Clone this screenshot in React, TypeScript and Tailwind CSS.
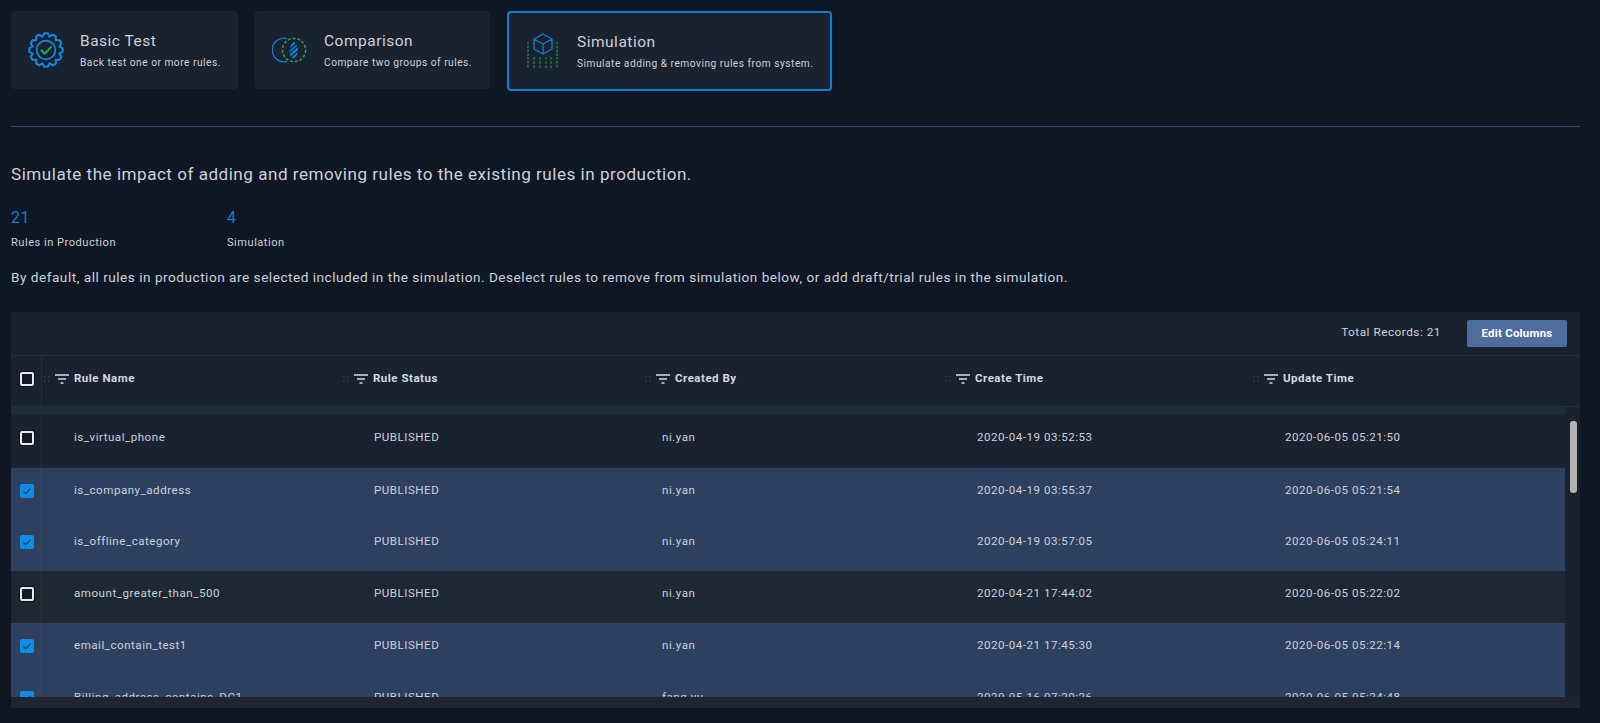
import React from "react";

const gearPath = (() => {
  const cx = 22, cy = 22, teeth = 12, ro = 20.5, ri = 16.8;
  let d = "";
  for (let i = 0; i < teeth; i++) {
    const a = (i / teeth) * Math.PI * 2;
    const st = (Math.PI * 2) / teeth;
    const pts = [
      [ri, a - st * 0.5],
      [ro, a - st * 0.2],
      [ro, a + st * 0.2],
    ];
    pts.forEach(([r, t], j) => {
      const x = (cx + r * Math.cos(t)).toFixed(2);
      const y = (cy + r * Math.sin(t)).toFixed(2);
      d += (i === 0 && j === 0 ? "M" : "L") + x + " " + y + " ";
    });
  }
  return d + "Z";
})();

const GearIcon = () => (
  <svg width="36" height="36" viewBox="0 0 44 44" fill="none">
    <path d={gearPath} stroke="#0d8ce6" strokeWidth="2.4" strokeLinejoin="round" />
    <circle cx="22" cy="22" r="11.5" stroke="#0d8ce6" strokeWidth="2" />
    <path d="M16.5 22.5l4 4 7.5-8" stroke="#22a84f" strokeWidth="2.6" strokeLinecap="round" strokeLinejoin="round" />
  </svg>
);

const CompareIcon = () => (
  <svg width="36" height="26" viewBox="0 0 36 26" fill="none">
    <path d="M15 1.6A11.8 11.8 0 1 0 15 24.4" stroke="#0d7fd4" strokeWidth="1.4" />
    <circle cx="22" cy="13" r="11.6" stroke="#22a84f" strokeWidth="1.5" strokeDasharray="3 1.8" />
    <path d="M22 4.5C18 8.5 17.5 12 17.5 15C17.5 18.5 19.5 21 21.5 21.5C24 20 26 17 26 13C26 10 24 7 22 4.5z" fill="#0d7fd4" />
    <path d="M17 13l7-6M17 17l9-8M18 21l9-8" stroke="#1a222f" strokeWidth="1.2" />
  </svg>
);

const SimIcon = () => (
  <svg width="32" height="36" viewBox="0 0 32 36" fill="none">
    <path d="M16 1l9 5v10l-9 5-9-5V6z M7 6l9 5 9-5 M16 11v10" stroke="#0d7fd4" strokeWidth="1.3" strokeLinejoin="round" />
    <path d="M1 9v26M30 9v26" stroke="#22a84f" strokeWidth="1" strokeDasharray="2.5 1.3" />
    <path d="M7 24v11M24 24v11" stroke="#22a84f" strokeWidth="1" strokeDasharray="2.5 1.8" />
    <path d="M13 24v11M19 24v11" stroke="#22a84f" strokeWidth="1" strokeDasharray="2.5 1.8" />
  </svg>
);

const FilterIcon = () => (
  <svg width="14" height="10" viewBox="0 0 14 10" className="shrink-0">
    <path d="M0 0.9h14M3 4.9h8M5.5 8.9h3" stroke="#d5d9e2" strokeWidth="1.5" />
  </svg>
);

const Grip = () => (
  <svg width="6" height="6" viewBox="0 0 6 6" className="shrink-0">
    <g fill="#2f3b50">
      <rect x="0" y="0" width="1.5" height="1.5" />
      <rect x="4" y="0" width="1.5" height="1.5" />
      <rect x="0" y="4" width="1.5" height="1.5" />
      <rect x="4" y="4" width="1.5" height="1.5" />
    </g>
  </svg>
);

const Checkbox = ({ checked }: { checked: boolean }) =>
  checked ? (
    <span className="flex h-[14px] w-[14px] items-center justify-center rounded-[2px] bg-[#0d8ce6]">
      <svg width="10" height="10" viewBox="0 0 10 10" fill="none">
        <path d="M1.5 5.5l2.2 2.2 4.8-5" stroke="#2e4060" strokeWidth="1.2" />
      </svg>
    </span>
  ) : (
    <span className="block h-[14px] w-[14px] rounded-[2px] border-2 border-[#e8eaee] bg-[#121926] shadow-[0_0_0_1px_#0b101a]" />
  );

const cards = [
  { title: "Basic Test", sub: "Back test one or more rules.", icon: <GearIcon />, w: "w-[227px] h-[78px]", active: false },
  { title: "Comparison", sub: "Compare two groups of rules.", icon: <CompareIcon />, w: "w-[235px] h-[78px]", active: false },
  { title: "Simulation", sub: "Simulate adding & removing rules from system.", icon: <SimIcon />, w: "w-[325px] h-[80px]", active: true },
];

const columns = [
  { label: "Rule Name", w: "w-[299px]" },
  { label: "Rule Status", w: "w-[302px]" },
  { label: "Created By", w: "w-[300px]" },
  { label: "Create Time", w: "w-[308px]" },
  { label: "Update Time", w: "w-[300px]" },
];

const rows = [
  { name: "is_virtual_phone", by: "ni.yan", c: "2020-04-19 03:52:53", u: "2020-06-05 05:21:50", sel: false, bg: "bg-[#1a222f]", line: "" },
  { name: "is_company_address", by: "ni.yan", c: "2020-04-19 03:55:37", u: "2020-06-05 05:21:54", sel: true, bg: "bg-[#2e4060]", line: "border-t border-[#1f2836]" },
  { name: "is_offline_category", by: "ni.yan", c: "2020-04-19 03:57:05", u: "2020-06-05 05:24:11", sel: true, bg: "bg-[#2e4060]", line: "" },
  { name: "amount_greater_than_500", by: "ni.yan", c: "2020-04-21 17:44:02", u: "2020-06-05 05:22:02", sel: false, bg: "bg-[#1d2833]", line: "" },
  { name: "email_contain_test1", by: "ni.yan", c: "2020-04-21 17:45:30", u: "2020-06-05 05:22:14", sel: true, bg: "bg-[#2e4060]", line: "" },
  { name: "Billing_address_contains_DC1", by: "fang.yu", c: "2020-05-16 07:20:26", u: "2020-06-05 05:24:48", sel: true, bg: "bg-[#2e4060]", line: "" },
];

export default function App() {
  return (
    <div className="h-[723px] overflow-hidden bg-[#0f1724] px-[11px] pt-[11px] font-['Roboto',sans-serif] text-[#ccd1dc] tracking-[0.5px]">
      <div className="flex items-start gap-[17px]">
        {cards.map((c) => (
          <div
            key={c.title}
            className={`flex shrink-0 items-center rounded-[4px] bg-[#1a222f] ${c.w} ${c.active ? "border-2 border-[#0e7fd1] pl-[18px]" : "pl-[17px]"}`}
          >
            <div className={`flex shrink-0 justify-start ${c.active ? "w-[50px]" : "w-[52px]"}`}>{c.icon}</div>
            <div className="flex flex-col">
              <span className="text-[15.5px] leading-[20px]">{c.title}</span>
              <span className="mt-[5px] text-[10.2px] leading-[14px]">{c.sub}</span>
            </div>
          </div>
        ))}
      </div>

      <div className="mt-[35px] h-px w-[1569px] bg-[#2a4a7d]" />

      <h1 className="mt-[36px] text-[17.1px] font-normal leading-[22px]">
        Simulate the impact of adding and removing rules to the existing rules in production.
      </h1>

      <div className="mt-[22px] flex">
        <div className="w-[216px]">
          <div className="text-[16px] leading-[22px] text-[#0d7fd4]">21</div>
          <div className="mt-[6px] text-[11.1px] leading-[16px]">Rules in Production</div>
        </div>
        <div>
          <div className="text-[16px] leading-[22px] text-[#0d7fd4]">4</div>
          <div className="mt-[6px] text-[11.1px] leading-[16px]">Simulation</div>
        </div>
      </div>

      <p className="mt-[16px] text-[13.63px] leading-[20px]">
        By default, all rules in production are selected included in the simulation. Deselect rules to remove from simulation below, or add draft/trial rules in the simulation.
      </p>

      <div className="mt-[25px] h-[396px] w-[1569px] overflow-hidden bg-[#1a222f]">
        <div className="flex h-[44px] items-center justify-end border-b border-[#252e3c] pr-[13px]">
          <span className="mb-[1px] mr-[26px] text-[11.8px]">Total Records: 21</span>
          <button className="h-[27px] w-[100px] rounded-[2px] bg-[#4f6c9f] text-[11.5px] font-bold tracking-[0.2px] text-white">
            Edit Columns
          </button>
        </div>

        <div className="flex h-[51px] items-center border-b border-[#252e3c]">
          <div className="flex h-full w-[31px] shrink-0 items-center justify-center border-r border-[#252e3c] pb-[5px] pl-[1px]">
            <Checkbox checked={false} />
          </div>
          {columns.map((col) => (
            <div key={col.label} className={`flex shrink-0 items-center pb-[5px] pl-[2px] ${col.w}`}>
              <Grip />
              <span className="ml-[5px]"><FilterIcon /></span>
              <span className="ml-[5px] text-[11.5px] font-bold text-[#d5d9e2]">{col.label}</span>
            </div>
          ))}
        </div>

        <div className="relative h-[290px] overflow-hidden">
          <div className="h-[8px] w-[1554px] bg-[#1e2c39]" />
          {rows.map((r) => (
            <div
              key={r.name}
              className={`grid h-[52px] w-[1554px] grid-cols-[63px_300px_288px_315px_308px_1fr] items-center text-[11.6px] ${r.bg} ${r.line}`}
            >
              <div className="flex h-[52px] w-[31px] items-center justify-center border-r border-[#ffffff0d] pb-[6px] pl-[1px]">
                <Checkbox checked={r.sel} />
              </div>
              <span className="pb-[6px]">{r.name}</span>
              <span className="pb-[6px]">PUBLISHED</span>
              <span className="pb-[6px]">{r.by}</span>
              <span className="pb-[6px]">{r.c}</span>
              <span className="pb-[6px]">{r.u}</span>
            </div>
          ))}
          <div className="absolute right-[3px] top-[14px] h-[72px] w-[7px] rounded-[3px] bg-[#b4b4b4]" />
        </div>
        <div className="h-[11px] bg-[#1e2530]" />
      </div>
    </div>
  );
}
